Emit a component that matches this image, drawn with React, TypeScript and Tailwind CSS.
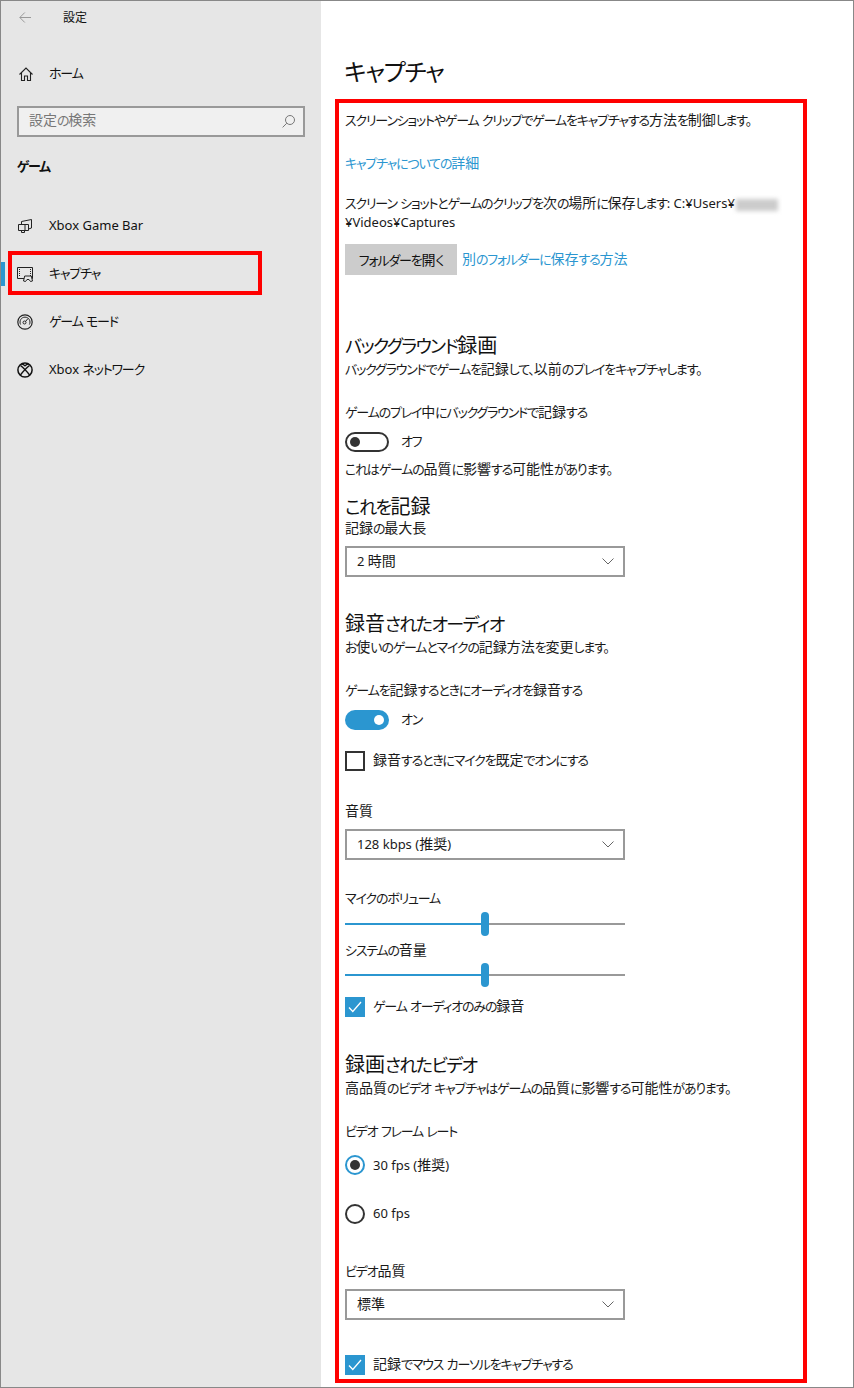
import { ReactNode } from 'react'

const sans = "font-['Noto_Sans','Noto_Sans_CJK_JP',sans-serif] [font-feature-settings:'palt']"

// the original font has narrow kana next to full-width kanji, so runs get their own size
function Jp({ text, title }: { text: string; title?: boolean }) {
  const runs = text.match(/[\u3000-\u30ff]+|[\u4e00-\u9fff]+|[^\u3000-\u30ff\u4e00-\u9fff]+/g) ?? []
  return (
    <>
      {runs.map((run, i) => {
        if (/[\u3000-\u30ff]/.test(run)) {
          return <span key={i} className={title ? 'text-[18px] tracking-[-1.6px]' : 'text-[13px] tracking-[-1.2px]'}>{run}</span>
        }
        if (/[\u4e00-\u9fff]/.test(run)) {
          return <span key={i} className={title ? 'text-[20px]' : 'text-[14px]'}>{run}</span>
        }
        return <span key={i}>{run}</span>
      })}
    </>
  )
}

function GameBarIcon() {
  return (
    <svg width="16" height="16" viewBox="0 0 16 16" fill="none" stroke="#222" strokeWidth="1">
      <path d="M1.500 6.500h10v6h-10zM4.500 6.500v-3l10-2v8.500l-3 1M8 6.500v6M4.500 12.500v2h3v-2" />
    </svg>
  )
}

function CaptureIcon() {
  return (
    <svg width="16" height="16" viewBox="0 0 16 16" fill="none" stroke="#222" strokeWidth="1">
      <path d="M.5 1.500h15v11H.5z" />
      <path d="M2.500 3v8M13.500 3v8" strokeDasharray="1 1" />
      <path d="M6.500 15l1.200-5h6.600l1.200 5-2 .5-1.500-2h-2l-1.500 2z" fill="#e6e6e6" />
    </svg>
  )
}

function GameModeIcon() {
  return (
    <svg width="16" height="16" viewBox="0 0 16 16" fill="none" stroke="#222" strokeWidth="1.200">
      <circle cx="8" cy="8" r="7.200" />
      <path d="M3.600 10.500a5 5 0 1 1 8.800 0" strokeWidth="1" />
      <circle cx="7.500" cy="8.500" r="1.500" strokeWidth="1" />
      <path d="M8.500 7.500l2.500-3" strokeWidth="1" />
    </svg>
  )
}

function XboxIcon() {
  return (
    <svg width="16" height="16" viewBox="0 0 16 16" fill="none" stroke="#111">
      <circle cx="8" cy="8" r="7.100" strokeWidth="1.500" />
      <path d="M3.500 3.500C5.500 5 9.500 9 12.800 13.200M12.500 3.500C10.500 5 6.500 9 3.200 13.200" strokeWidth="1.500" />
      <path d="M4.500 1.800C6 2.200 7 2.800 8 3.800 9 2.800 10 2.200 11.500 1.800" strokeWidth="1.300" />
    </svg>
  )
}

function NavItem({ icon, label, active }: { icon: ReactNode; label: string; active?: boolean }) {
  return (
    <div className="relative flex items-center h-12 pl-[16px] text-[13px] text-[#111]">
      {active && <div className="absolute left-0 top-[12px] w-1 h-6 bg-[#2b96d0]" />}
      <span className="w-[32px] flex">{icon}</span>
      <span><Jp text={label} /></span>
    </div>
  )
}

function Dropdown({ value, className }: { value: string; className: string }) {
  return (
    <div className={`w-[280px] h-[31px] border-2 border-[#999] flex items-center justify-between pl-[10px] pr-[9px] text-[13px] text-[#1a1a1a] ${className}`}>
      <span className="pb-px"><Jp text={value} /></span>
      <svg width="12" height="7" viewBox="0 0 12 7" fill="none" stroke="#666" strokeWidth="1">
        <path d="M.5.5L6 6 11.500.5" />
      </svg>
    </div>
  )
}

function Line({ text, className = 'mt-0' }: { text: string; className?: string }) {
  return <div className={`h-5 leading-5 text-[13px] text-[#1a1a1a] whitespace-nowrap ${className}`}><Jp text={text} /></div>
}

function Title({ text, className }: { text: string; className: string }) {
  return <div className={`h-[26px] leading-[26px] text-[18px] text-[#111] whitespace-nowrap ${className}`}><Jp text={text} title /></div>
}

function Toggle({ on, label }: { on: boolean; label: string }) {
  return (
    <div className="flex items-center h-5 mt-[10px]">
      {on ? (
        <div className="w-11 h-5 rounded-full bg-[#2b96d0] flex items-center justify-end pr-[5px]">
          <div className="w-[10px] h-[10px] rounded-full bg-white" />
        </div>
      ) : (
        <div className="w-11 h-5 rounded-full border-2 border-[#333] flex items-center pl-[3px]">
          <div className="w-[10px] h-[10px] rounded-full bg-[#333]" />
        </div>
      )}
      <span className="ml-3 text-[13px] text-[#1a1a1a]"><Jp text={label} /></span>
    </div>
  )
}

function Checkbox({ checked, label, className }: { checked?: boolean; label: string; className: string }) {
  return (
    <div className={`flex items-center h-5 ${className}`}>
      {checked ? (
        <div className="w-5 h-5 bg-[#2b96d0] flex items-center justify-center">
          <svg width="14" height="12" viewBox="0 0 14 12" fill="none" stroke="#fff" strokeWidth="1.300">
            <path d="M1 6.500L4.800 10.500 13 1" />
          </svg>
        </div>
      ) : (
        <div className="w-5 h-5 border-2 border-[#333]" />
      )}
      <span className="ml-2 pb-[2px] text-[13px] text-[#1a1a1a]"><Jp text={label} /></span>
    </div>
  )
}

function Radio({ checked, label, className }: { checked?: boolean; label: string; className: string }) {
  return (
    <div className={`flex items-center h-5 ${className}`}>
      {checked ? (
        <div className="w-5 h-5 rounded-full border-2 border-[#2b96d0] flex items-center justify-center">
          <div className="w-[10px] h-[10px] rounded-full bg-[#333]" />
        </div>
      ) : (
        <div className="w-5 h-5 rounded-full border-2 border-[#333]" />
      )}
      <span className="ml-2 text-[13px] text-[#1a1a1a]"><Jp text={label} /></span>
    </div>
  )
}

function Slider({ className }: { className: string }) {
  return (
    <div className={`relative w-[280px] h-6 flex items-center ${className}`}>
      <div className="w-[140px] h-0.5 bg-[#2b96d0]" />
      <div className="w-[140px] h-0.5 bg-[#999]" />
      <div className="absolute left-[136px] top-0 w-2 h-6 rounded-full bg-[#2b96d0]" />
    </div>
  )
}

export default function App() {
  return (
    <div className={`w-[854px] h-[1388px] flex border border-[#888] bg-white overflow-hidden ${sans}`}>
      <aside className="w-[320px] shrink-0 bg-[#e6e6e6]">
        <div className="flex items-center h-[33px] pl-[18px] text-[12px] text-[#111]">
          <svg width="12" height="11" viewBox="0 0 12 11" fill="none" stroke="#999" strokeWidth="1">
            <path d="M12 5.500H1M5.800.5L.8 5.500l5 5" />
          </svg>
          <span className="ml-[32px]">設定</span>
        </div>
        <div className="flex items-center h-12 mt-4 pl-[18px] text-[13px] text-[#111]">
          <svg width="14" height="14" viewBox="0 0 14 14" fill="none" stroke="#222" strokeWidth="1.100">
            <path d="M.5 7.500L7 1l6.500 6.500M2.500 6v7.500h3V9h3v4.500h3V6" />
          </svg>
          <span className="ml-[16px]"><Jp text="ホーム" /></span>
        </div>
        <div className="mx-[16px] mt-2 w-[288px] h-[31px] border-2 border-[#999] bg-[#f0f0f0] flex items-center justify-between pl-[10px] pr-2 text-[13px] text-[#777]">
          <span className="pb-[3px]"><Jp text="設定の検索" /></span>
          <svg width="13" height="13" viewBox="0 0 13 13" fill="none" stroke="#777" strokeWidth="1">
            <circle cx="8" cy="5" r="4.500" />
            <path d="M4.800 8.200L.6 12.400" />
          </svg>
        </div>
        <div className="mt-[19px] pl-[16px] h-5 leading-5 text-[13px] font-bold text-[#111]"><Jp text="ゲーム" /></div>
        <div className="mt-[26px]">
          <NavItem icon={<GameBarIcon />} label="Xbox Game Bar" />
          <NavItem icon={<CaptureIcon />} label="キャプチャ" active />
          <NavItem icon={<GameModeIcon />} label="ゲーム モード" />
          <NavItem icon={<XboxIcon />} label="Xbox ネットワーク" />
        </div>
      </aside>
      <main className="flex-1 pl-[14px]">
        <h1 className="h-[32px] mt-[55px] leading-[32px] pl-[9px] text-[24px] tracking-[-1.2px] font-normal text-[#111]">キャプチャ</h1>
        <div className="w-[472px] h-[1284px] mt-[11px] border-4 border-[#ff0000] pl-[6px] pt-[7px]">
          <Line text="スクリーンショットやゲーム クリップでゲームをキャプチャする方法を制御します。" />
          <div className="mt-[23px] h-5 leading-5 text-[13px] text-[#2b96d0]"><Jp text="キャプチャについての詳細" /></div>
          <div className="mt-5 h-5 leading-5 text-[13px] text-[#1a1a1a] whitespace-nowrap">
            <Jp text="スクリーン ショットとゲームのクリップを次の場所に保存します: C:¥Users¥" />
            <span className="inline-block w-[42px] h-3 ml-px align-middle bg-[#ccc] blur-[2px]" />
          </div>
          <Line text="¥Videos¥Captures" className="-mt-px" />
          <div className="flex items-center mt-3">
            <div className="w-[112px] h-[31px] bg-[#ccc] flex items-center justify-center text-[13px] text-[#111]"><span><Jp text="フォルダーを開く" /></span></div>
            <span className="ml-[5px] pb-[2px] text-[13px] text-[#2b96d0]"><Jp text="別のフォルダーに保存する方法" /></span>
          </div>

          <Title text="バックグラウンド録画" className="mt-[58px]" />
          <Line text="バックグラウンドでゲームを記録して、以前のプレイをキャプチャします。" />
          <Line text="ゲームのプレイ中にバックグラウンドで記録する" className="mt-[23px]" />
          <Toggle on={false} label="オフ" />
          <Line text="これはゲームの品質に影響する可能性があります。" className="mt-[7px]" />
          <Title text="これを記録" className="mt-[15px]" />
          <Line text="記録の最大長" className="-mt-[2px]" />
          <Dropdown value="2 時間" className="mt-2" />

          <Title text="録音されたオーディオ" className="mt-[34px]" />
          <Line text="お使いのゲームとマイクの記録方法を変更します。" />
          <Line text="ゲームを記録するときにオーディオを録音する" className="mt-[23px]" />
          <Toggle on label="オン" />
          <Checkbox label="録音するときにマイクを既定でオンにする" className="mt-[21px]" />
          <Line text="音質" className="mt-[30px]" />
          <Dropdown value="128 kbps (推奨)" className="mt-2" />
          <Line text="マイクのボリューム" className="mt-[28px]" />
          <Slider className="mt-1" />
          <Line text="システムの音量" className="mt-1" />
          <Slider className="mt-[3px]" />
          <Checkbox checked label="ゲーム オーディオのみの録音" className="mt-[10px]" />

          <Title text="録画されたビデオ" className="mt-[35px]" />
          <Line text="高品質のビデオ キャプチャはゲームの品質に影響する可能性があります。" />
          <Line text="ビデオ フレーム レート" className="mt-[23px]" />
          <Radio checked label="30 fps (推奨)" className="mt-[14px]" />
          <Radio label="60 fps" className="mt-[29px]" />
          <Line text="ビデオ品質" className="mt-[37px]" />
          <Dropdown value="標準" className="mt-2" />
          <Checkbox checked label="記録でマウス カーソルをキャプチャする" className="mt-[35px]" />
        </div>
      </main>
      <div className="absolute left-[8px] top-[251px] w-[254px] h-[44px] border-4 border-[#ff0000]" />
    </div>
  )
}
